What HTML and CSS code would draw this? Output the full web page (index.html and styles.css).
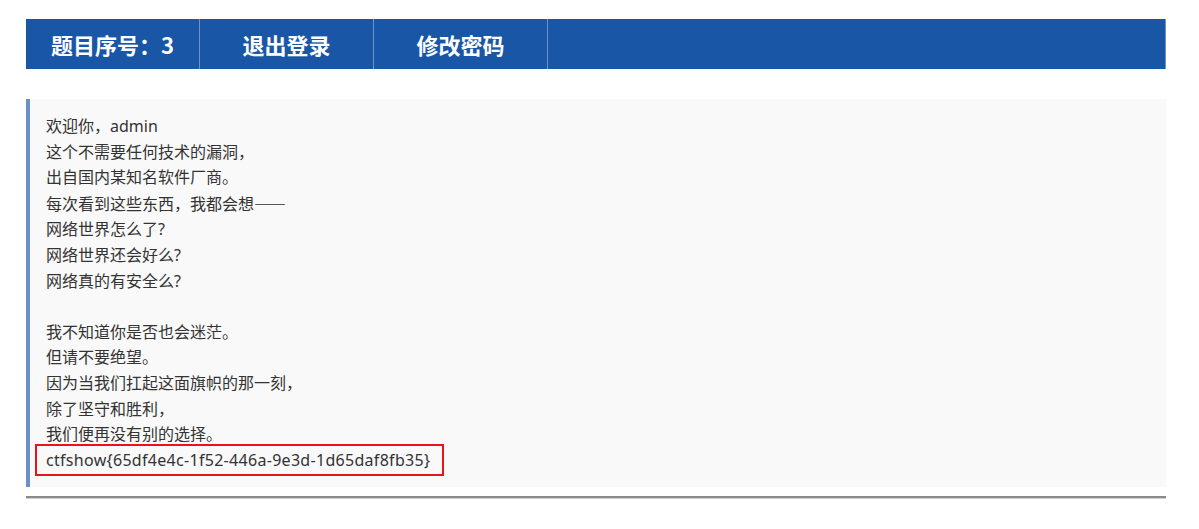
FILE: index.html
```html
<!DOCTYPE html>
<html lang="zh-CN">
<head>
<meta charset="utf-8">
<title>ctfshow</title>
<link rel="stylesheet" href="styles.css">
</head>
<body>
<div class="page">
  <ul class="nav">
    <li class="nav-item">题目序号：3</li>
    <li class="nav-item">退出登录</li>
    <li class="nav-item">修改密码</li>
  </ul>
  <div class="content">
    <div class="line">欢迎你，admin</div>
    <div class="line">这个不需要任何技术的漏洞，</div>
    <div class="line">出自国内某知名软件厂商。</div>
    <div class="line">每次看到这些东西，我都会想<span class="dash">——</span></div>
    <div class="line">网络世界怎么了?</div>
    <div class="line">网络世界还会好么?</div>
    <div class="line">网络真的有安全么?</div>
    <div class="line">&nbsp;</div>
    <div class="line">我不知道你是否也会迷茫。</div>
    <div class="line">但请不要绝望。</div>
    <div class="line">因为当我们扛起这面旗帜的那一刻，</div>
    <div class="line">除了坚守和胜利，</div>
    <div class="line">我们便再没有别的选择。</div>
    <div class="line"><span class="flag">ctfshow{65df4e4c-1f52-446a-9e3d-1d65daf8fb35}</span></div>
  </div>
  <div class="rule"></div>
</div>
</body>
</html>
```
FILE: styles.css
```css
html, body {
  margin: 0;
  padding: 0;
  background: #ffffff;
}
body {
  font-family: "Noto Sans", "Noto Sans CJK SC", sans-serif;
  color: #333333;
}
.page {
  width: 1140px;
  margin-left: 26px;
  padding-top: 19px;
}
.nav {
  list-style: none;
  margin: 0;
  padding: 0;
  height: 50px;
  display: flex;
  background: #1a56a6;
  border-right: 1px solid #6a92cc;
}
.nav-item {
  width: 174px;
  border-right: 1px solid #6a92cc;
  display: flex;
  align-items: center;
  justify-content: center;
  color: #ffffff;
  font-weight: bold;
  font-size: 22px;
  font-family: "Noto Sans CJK SC", sans-serif;
  box-sizing: border-box;
}
.content {
  margin-top: 30px;
  background: #f9f9f9;
  border-left: 4px solid #6b8fc9;
  padding: 15px 16px 14px 16px;
  font-size: 16px;
  line-height: 25.6px;
}
.line {
  white-space: nowrap;
}
.dash {
  font-family: "Noto Sans CJK SC", sans-serif;
}
.flag {
  border: 2px solid #e8141c;
  padding: 3px 12px 3px 9px;
  margin-left: -11px;
  letter-spacing: 0.3px;
}
.rule {
  margin-top: 9px;
  height: 2px;
  background: #8a8a8a;
  border-bottom: 1px solid #cfcfcf;
}
```
